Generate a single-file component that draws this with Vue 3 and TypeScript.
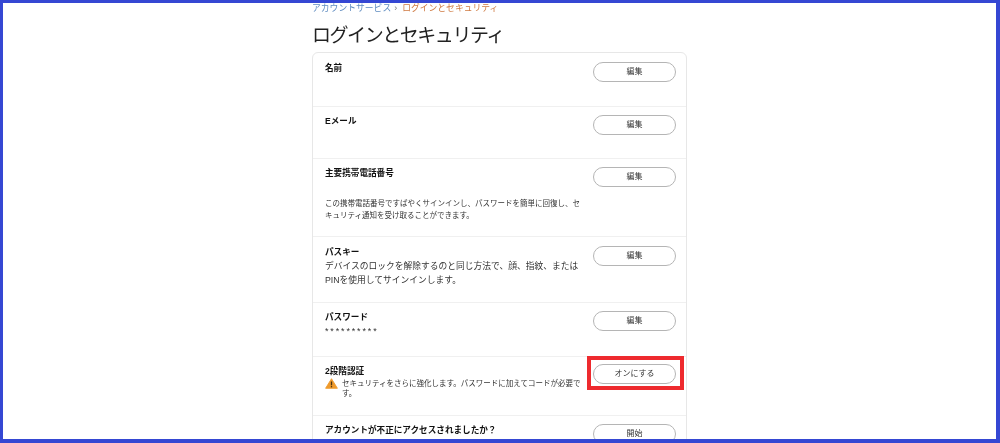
<script setup lang="ts">
interface Row { title: string; button: string; h: number; }
const rows: Row[] = [
  { title: '名前', button: '編集', h: 54 },
  { title: 'Eメール', button: '編集', h: 52 },
];
</script>

<template>
  <div class="frame">
    <main class="page">
      <nav class="crumbs"><span class="link">アカウントサービス</span><span class="sep">›</span><span class="current">ログインとセキュリティ</span></nav>
      <h1 class="title">ログインとセキュリティ</h1>
      <section class="card">
        <div v-for="r in rows" :key="r.title" class="row" :style="{ height: r.h + 'px' }">
          <div class="info"><div class="label">{{ r.title }}</div></div>
          <button class="btn">{{ r.button }}</button>
        </div>
        <div class="row r3">
          <div class="info">
            <div class="label">主要携帯電話番号</div>
            <p class="small phone">この携帯電話番号ですばやくサインインし、パスワードを簡単に回復し、セキュリティ通知を受け取ることができます。</p>
          </div>
          <button class="btn">編集</button>
        </div>
        <div class="row r4">
          <div class="info">
            <div class="label">パスキー</div>
            <p class="body">デバイスのロックを解除するのと同じ方法で、顔、指紋、またはPINを使用してサインインします。</p>
          </div>
          <button class="btn">編集</button>
        </div>
        <div class="row r5">
          <div class="info">
            <div class="label">パスワード</div>
            <div class="stars">**********</div>
          </div>
          <button class="btn">編集</button>
        </div>
        <div class="row r6">
          <div class="info">
            <div class="label">2段階認証</div>
            <div class="warn">
              <svg class="tri" viewBox="0 0 14 12" width="13" height="11">
                <path d="M7 .8 13.4 11.2H.6Z" fill="#ef9a2c" stroke="#ef9a2c" stroke-linejoin="round" />
                <rect x="6.3" y="3.8" width="1.4" height="4.2" fill="#4a3414" />
                <rect x="6.3" y="8.8" width="1.4" height="1.4" fill="#4a3414" />
              </svg>
              <p class="small">セキュリティをさらに強化します。パスワードに加えてコードが必要です。</p>
            </div>
          </div>
          <div class="hl"><button class="btn on">オンにする</button></div>
        </div>
        <div class="row r7">
          <div class="info"><div class="label">アカウントが不正にアクセスされましたか？</div></div>
          <button class="btn">開始</button>
        </div>
      </section>
    </main>
  </div>
</template>

<style>
html, body { margin: 0; background: #fff; }
</style>

<style scoped>
.frame {
  box-sizing: border-box;
  width: 1000px;
  height: 443px;
  border: 3px solid #3547d3;
  border-bottom-width: 4px;
  border-right-width: 4px;
  overflow: hidden;
  background: #fff;
  font-family: "Liberation Sans", "Noto Sans CJK JP", sans-serif;
  color: #111;
  filter: blur(0.45px);
}
.page { width: 375px; margin-left: 309px; }
.crumbs { font-size: 8.8px; line-height: 12px; margin-top: -1px; display: flex; align-items: center; white-space: nowrap; }
.link { color: #5f8cc0; }
.sep { color: #777; margin: 0 5px 0 3px; }
.current { color: #cf7a42; }
.title { font-size: 19px; font-weight: 400; line-height: 26px; margin: 9px 0 3px; color: #222; letter-spacing: -1.45px; }
.card { border: 1px solid #e7e7e7; border-radius: 6px; height: 500px; overflow: hidden; }
.row { box-sizing: border-box; display: flex; justify-content: space-between; align-items: flex-start; padding: 8px 10px 0 12px; border-bottom: 1px solid #f0f0f0; }
.row:first-child { padding-top: 9px; }
.info { width: 256px; }
.label { font-size: 8.6px; font-weight: 700; line-height: 12px; color: #111; }
.small { font-size: 7.5px; line-height: 12px; margin: 0; color: #333; }
.phone { margin-top: 19px; }
.body { font-size: 8.75px; line-height: 14px; margin: 1px 0 0; color: #333; }
.stars { font-size: 9px; line-height: 10px; color: #333; margin-top: 3px; letter-spacing: 1.85px; }
.btn { box-sizing: border-box; width: 83px; height: 20px; border: 1px solid #b5b5b5; border-radius: 10px; background: #fff; font: inherit; font-size: 8px; padding: 0 0 3px; color: #333; flex: none; }
.r3 { height: 78px; }
.r4 { height: 66px; padding-top: 9px; }
.r5 { height: 54px; }
.r6 { height: 59px; padding-top: 8px; }
.r7 { height: 60px; border-bottom: 0; }
.warn { display: flex; gap: 4px; align-items: flex-start; margin-top: 0; }
.warn .tri { flex: none; margin-top: 1px; }
.warn .small { line-height: 10px; margin-top: 2px; }
.hl { position: relative; display: flex; margin-top: -1px; }
.hl::after { content: ""; position: absolute; left: -6px; top: -8px; right: -8px; bottom: -6px; border: 4px solid #ee2a2e; pointer-events: none; }
</style>
